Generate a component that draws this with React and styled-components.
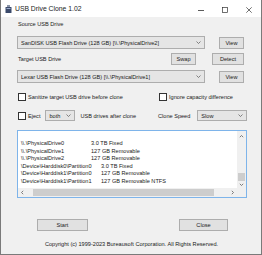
import React from "react";
import styled, { createGlobalStyle } from "styled-components";

const Global = createGlobalStyle`
  html, body { margin: 0; padding: 0; background: #f0f0f0; }
  body { font-family: "Liberation Sans", Arial, sans-serif; }
  * { box-sizing: border-box; }
`;

const Window = styled.div`
  width: 262px;
  height: 255px;
  background: #f0f0f0;
  border: 1px solid #7a7a7a;
  border-top: none;
  display: flex;
  flex-direction: column;
  font-size: 5.6px;
  color: #1a1a1a;
  overflow: hidden;
`;

const TitleBar = styled.div`
  height: 17px;
  background: #ffffff;
  display: flex;
  align-items: center;
  padding-left: 4px;
  flex-shrink: 0;
`;

const TitleText = styled.span`
  font-size: 6.8px;
  color: #222;
  margin-left: 3px;
  margin-top: -1px;
`;

const Controls = styled.div`
  margin-left: auto;
  display: flex;
  align-items: center;
  height: 100%;
`;

const Ctl = styled.div`
  width: 24px;
  height: 100%;
  display: flex;
  align-items: center;
  justify-content: center;
  margin-top: 3px;
`;

const Body = styled.div`
  padding: 0 17px 0 16px;
  display: flex;
  flex-direction: column;
`;

const Label = styled.div`
  height: 8px;
  line-height: 8px;
  margin-top: ${(p) => p.$mt || 0}px;
  padding-left: 1px;
`;

const Row = styled.div`
  display: flex;
  align-items: center;
  height: ${(p) => p.$h}px;
  margin-top: ${(p) => p.$mt || 0}px;
`;

const Combo = styled.div`
  height: ${(p) => p.$h || 13}px;
  width: ${(p) => p.$w}px;
  margin-left: ${(p) => p.$ml || 0}px;
  background: #e5e5e5;
  border: 1px solid #adadad;
  display: flex;
  align-items: center;
  padding-left: 3px;
  white-space: nowrap;
  overflow: hidden;
  flex-shrink: 0;
`;

const ComboText = styled.span`
  flex: 1;
  overflow: hidden;
`;

const Arrow = styled.svg`
  width: 5px;
  height: 3px;
  margin: 0 3px 0 2px;
  flex-shrink: 0;
`;

const Button = styled.div`
  width: ${(p) => p.$w}px;
  height: 12px;
  margin-left: ${(p) => p.$ml || 0}px;
  background: #e1e1e1;
  border: 1px solid #adadad;
  display: flex;
  align-items: center;
  justify-content: center;
  flex-shrink: 0;
`;

const Spacer = styled.div`
  flex: 1;
`;

const Check = styled.div`
  width: 8px;
  height: 8px;
  border: 1px solid #333;
  background: #fff;
  margin-left: ${(p) => p.$ml || 1}px;
  flex-shrink: 0;
`;

const CheckLabel = styled.span`
  margin-left: 2px;
  white-space: nowrap;
`;

const LeftCol = styled.div`
  width: 141px;
  display: flex;
  align-items: center;
  flex-shrink: 0;
`;

const Text = styled.span`
  margin-left: ${(p) => p.$ml || 0}px;
  white-space: nowrap;
`;

const ListBox = styled.div`
  margin-top: 9px;
  height: 68px;
  width: 230px;
  background: #fff;
  border: 1px solid #7eb4ea;
  display: grid;
  grid-template-columns: 1fr 9px;
  grid-template-rows: 1fr 9px;
  overflow: hidden;
`;

const ListContent = styled.div`
  padding: 9px 0 0 3px;
  overflow: hidden;
`;

const Line = styled.div`
  display: flex;
  height: 7.6px;
  line-height: 7.6px;
  white-space: nowrap;
`;

const Name = styled.span`
  width: ${(p) => p.$w}px;
  flex-shrink: 0;
`;

const VScroll = styled.div`
  background: #f0f0f0;
  display: flex;
  flex-direction: column;
  align-items: center;
`;

const VThumb = styled.div`
  width: 7px;
  height: 8px;
  background: #cdcdcd;
  margin-top: auto;
`;

const HScroll = styled.div`
  background: #f0f0f0;
  display: flex;
  align-items: center;
`;

const HThumb = styled.div`
  height: 7px;
  width: 181px;
  margin-left: 8px;
  background: #cdcdcd;
`;

const Corner = styled.div`
  background: #f0f0f0;
`;

const ScrollArrow = styled.svg`
  width: 5px;
  height: 5px;
  flex-shrink: 0;
  margin: ${(p) => p.$m || "0"};
`;

const ButtonRow = styled.div`
  display: flex;
  justify-content: space-between;
  padding: 0 0 0 20px;
  margin-top: 21px;
  margin-right: -1px;
  padding-right: 17px;
`;

const Copyright = styled.div`
  margin-top: 9px;
  height: 8px;
  line-height: 8px;
  text-align: center;
  padding-left: 2px;
  white-space: nowrap;
`;

const Chevron = () => (
  <Arrow viewBox="0 0 5 3">
    <path d="M0.5 0.5 L2.5 2.5 L4.5 0.5" fill="none" stroke="#555" strokeWidth="0.7" />
  </Arrow>
);

const AppIcon = () => (
  <svg width="7" height="8" viewBox="0 0 7 8">
    <rect x="2" y="0" width="3" height="2" fill="#8a94a8" />
    <rect x="0.5" y="2" width="6" height="6" rx="0.5" fill="#3b4a6b" />
    <rect x="1.5" y="3" width="4" height="1" fill="#9fb0d0" />
  </svg>
);

const lines = [
  { n: "\\\\.\\PhysicalDrive0", w: 70, d: "3.0 TB Fixed" },
  { n: "\\\\.\\PhysicalDrive1", w: 70, d: "127 GB Removable" },
  { n: "\\\\.\\PhysicalDrive2", w: 70, d: "127 GB Removable" },
  { n: "\\Device\\Harddisk0\\Partition0", w: 80, d: "3.0 TB Fixed" },
  { n: "\\Device\\Harddisk1\\Partition0", w: 80, d: "127 GB Removable" },
  { n: "\\Device\\Harddisk1\\Partition1", w: 80, d: "127 GB Removable NTFS" },
];

export default function App() {
  return (
    <>
      <Global />
      <Window>
        <TitleBar>
          <AppIcon />
          <TitleText>USB Drive Clone 1.02</TitleText>
          <Controls>
            <Ctl>
              <svg width="6" height="1" viewBox="0 0 6 1">
                <rect width="6" height="0.8" fill="#333" />
              </svg>
            </Ctl>
            <Ctl>
              <svg width="6" height="6" viewBox="0 0 6 6">
                <rect x="0.4" y="0.4" width="5.2" height="5.2" fill="none" stroke="#333" strokeWidth="0.7" />
              </svg>
            </Ctl>
            <Ctl>
              <svg width="6" height="6" viewBox="0 0 6 6">
                <path d="M0.3 0.3 L5.7 5.7 M5.7 0.3 L0.3 5.7" stroke="#333" strokeWidth="0.7" />
              </svg>
            </Ctl>
          </Controls>
        </TitleBar>
        <Body>
          <Label $mt={3}>Source USB Drive</Label>
          <Row $h={13} $mt={8}>
            <Combo $w={188}>
              <ComboText>SanDISK USB Flash Drive (128 GB) [\\.\PhysicalDrive2]</ComboText>
              <Chevron />
            </Combo>
            <Spacer />
            <Button $w={25}>View</Button>
          </Row>
          <Row $h={12} $mt={4}>
            <Label>Target USB Drive</Label>
            <Spacer />
            <Button $w={25}>Swap</Button>
            <Button $w={32} $ml={16}>Detect</Button>
          </Row>
          <Row $h={13} $mt={5}>
            <Combo $w={188}>
              <ComboText>Lexar USB Flash Drive (128 GB) [\\.\PhysicalDrive1]</ComboText>
              <Chevron />
            </Combo>
            <Spacer />
            <Button $w={25}>View</Button>
          </Row>
          <Row $h={9} $mt={9}>
            <LeftCol>
              <Check />
              <CheckLabel>Sanitize target USB drive before clone</CheckLabel>
            </LeftCol>
            <Check $ml={0} />
            <CheckLabel>Ignore capacity difference</CheckLabel>
          </Row>
          <Row $h={11} $mt={9}>
            <LeftCol>
              <Check />
              <CheckLabel>Eject</CheckLabel>
              <Combo $w={30} $h={11} $ml={5}>
                <ComboText>both</ComboText>
                <Chevron />
              </Combo>
              <Text $ml={5}>USB drives after clone</Text>
            </LeftCol>
            <Text>Clone Speed</Text>
            <Combo $w={50} $h={11} $ml={7}>
              <ComboText>Slow</ComboText>
              <Chevron />
            </Combo>
          </Row>
          <ListBox>
            <ListContent>
              {lines.map((l, i) => (
                <Line key={i}>
                  <Name $w={l.w}>{l.n}</Name>
                  <span>{l.d}</span>
                </Line>
              ))}
            </ListContent>
            <VScroll>
              <ScrollArrow viewBox="0 0 5 5" $m="3px 0 0 0">
                <path d="M0.8 3.2 L2.5 1.5 L4.2 3.2" fill="none" stroke="#606060" strokeWidth="0.8" />
              </ScrollArrow>
              <VThumb />
              <ScrollArrow viewBox="0 0 5 5" $m="1px 0 1px 0">
                <path d="M0.8 1.8 L2.5 3.5 L4.2 1.8" fill="none" stroke="#606060" strokeWidth="0.8" />
              </ScrollArrow>
            </VScroll>
            <HScroll>
              <ScrollArrow viewBox="0 0 5 5" $m="0 0 0 2px">
                <path d="M3.2 0.8 L1.5 2.5 L3.2 4.2" fill="none" stroke="#606060" strokeWidth="0.8" />
              </ScrollArrow>
              <HThumb />
              <Spacer />
              <ScrollArrow viewBox="0 0 5 5" $m="0 2px 0 0">
                <path d="M1.8 0.8 L3.5 2.5 L1.8 4.2" fill="none" stroke="#606060" strokeWidth="0.8" />
              </ScrollArrow>
            </HScroll>
            <Corner />
          </ListBox>
          <ButtonRow>
            <Button $w={51}>Start</Button>
            <Button $w={49}>Close</Button>
          </ButtonRow>
          <Copyright>Copyright (c) 1999-2023 Bureausoft Corporation. All Rights Reserved.</Copyright>
        </Body>
      </Window>
    </>
  );
}
